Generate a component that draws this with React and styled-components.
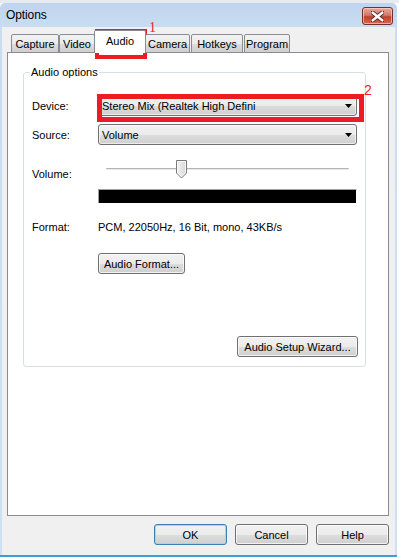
import React from 'react';
import styled, { createGlobalStyle } from 'styled-components';

const GlobalStyle = createGlobalStyle`
  html, body {
    margin: 0;
    padding: 0;
  }
  body {
    width: 399px;
    height: 557px;
    overflow: hidden;
    background: #ffffff;
    font-family: "Liberation Sans", Arial, sans-serif;
    font-size: 11px;
    color: #000;
  }
`;

const Screen = styled.div`
  position: relative;
  width: 399px;
  height: 557px;
  display: flex;
  flex-direction: column;
`;

const TopStrip = styled.div`
  height: 3px;
  background: #e7ebf0;
  border-bottom: 0;
`;

const Window = styled.div`
  width: 397px;
  flex: 1;
  display: flex;
  flex-direction: column;
  box-sizing: border-box;
  background: linear-gradient(180deg, #bfd5ee 0px, #c9dcf1 24px, #cde0f4 100%);
  border-bottom: 2px solid #3b9fd3;
  border-top-right-radius: 5px;
  border-top-left-radius: 5px;
`;

const TitleBar = styled.div`
  height: 24px;
  display: flex;
  align-items: center;
  justify-content: space-between;
  padding: 0 4px 0 6px;
`;

const Title = styled.span`
  font-size: 12px;
  color: #000;
  letter-spacing: -0.1px;
`;

const CloseButton = styled.div`
  width: 29px;
  height: 16px;
  margin-top: 2px;
  display: flex;
  align-items: center;
  justify-content: center;
  border: 1px solid #7a2e26;
  border-radius: 3px;
  background: linear-gradient(180deg, #e9a99c 0%, #d47a6a 45%, #c0402c 55%, #d26a52 100%);
  box-shadow: inset 0 0 0 1px rgba(255, 220, 210, 0.6);
`;

const Client = styled.div`
  flex: 1;
  margin: 0 2px;
  background: #f0f0f0;
  display: flex;
  flex-direction: column;
  padding: 4px 6px 8px 5px;
`;

const TabStrip = styled.div`
  display: flex;
  align-items: flex-end;
  height: 22px;
  padding-left: 4px;
  position: relative;
  z-index: 1;
  margin-bottom: -1px;
`;

const Tab = styled.div`
  box-sizing: border-box;
  width: ${(p) => p.w}px;
  margin-left: ${(p) => p.ml || 0}px;
  height: ${(p) => (p.active ? 23 : 19)}px;
  border: 1px solid #898c95;
  border-bottom: ${(p) => (p.active ? 'none' : '1px solid #898c95')};
  border-radius: 2px 2px 0 0;
  background: ${(p) =>
    p.active ? '#ffffff' : 'linear-gradient(180deg, #f2f2f2 0%, #ebebeb 50%, #dddddd 51%, #cfcfcf 100%)'};
  display: flex;
  align-items: center;
  justify-content: center;
  padding-bottom: ${(p) => (p.active ? 3 : 0)}px;
  white-space: nowrap;
`;

const Panel = styled.div`
  height: 464px;
  box-sizing: border-box;
  border: 1px solid #898c95;
  background: #ffffff;
  padding: 19px 22px 0 15px;
`;

const Group = styled.div`
  position: relative;
  height: 295px;
  box-sizing: border-box;
  border: 1px solid #d5dfe5;
  border-radius: 3px;
  display: flex;
  flex-direction: column;
  padding: 0 7px 9px 8px;
`;

const Legend = styled.span`
  position: absolute;
  top: -7px;
  left: 6px;
  padding: 0 1px;
  background: #ffffff;
  line-height: 13px;
`;

const Row = styled.div`
  display: flex;
  align-items: ${(p) => p.align || 'center'};
  margin-top: ${(p) => p.mt || 0}px;
  height: ${(p) => p.h}px;
`;

const Label = styled.div`
  width: 66px;
  flex: none;
  padding-top: ${(p) => p.pt || 0}px;
`;

const Combo = styled.div`
  width: 259px;
  height: 21px;
  box-sizing: border-box;
  border: 1px solid #707070;
  border-radius: 3px;
  background: linear-gradient(180deg, #f2f2f2 0%, #ebebeb 50%, #dddddd 51%, #cfcfcf 100%);
  display: flex;
  align-items: center;
  justify-content: space-between;
  padding: 0 4px 0 3px;
  box-shadow: inset 0 0 0 1px rgba(255, 255, 255, 0.6);
`;

const SliderBox = styled.div`
  position: relative;
  width: 259px;
  height: 22px;
`;

const Track = styled.div`
  position: absolute;
  left: 8px;
  right: 8px;
  top: 9px;
  height: 2px;
  background: #e7eaea;
  border-top: 1px solid #b5b5b5;
  box-sizing: border-box;
  border-radius: 1px;
`;

const Thumb = styled.svg`
  position: absolute;
  left: 78px;
  top: 1px;
`;

const Meter = styled.div`
  width: 259px;
  height: 14px;
  box-sizing: border-box;
  background: #000;
  border-top: 1px solid #a0a0a0;
  border-left: 1px solid #a0a0a0;
  border-right: 1px solid #ffffff;
`;

const Button = styled.div`
  width: ${(p) => p.w}px;
  height: 21px;
  box-sizing: border-box;
  border: 1px solid ${(p) => (p.primary ? '#3c7fb1' : '#707070')};
  border-radius: 3px;
  background: linear-gradient(180deg, #f2f2f2 0%, #ebebeb 50%, #dddddd 51%, #cfcfcf 100%);
  box-shadow: inset 0 0 0 1px ${(p) => (p.primary ? '#9bd7f6' : 'rgba(255,255,255,0.7)')};
  display: flex;
  align-items: center;
  justify-content: center;
  white-space: nowrap;
`;

const Indent = styled.div`
  margin-left: 66px;
`;

const WizardRow = styled.div`
  margin-top: auto;
  display: flex;
  justify-content: flex-end;
`;

const Footer = styled.div`
  margin-top: 8px;
  display: flex;
  justify-content: flex-end;
  gap: 8px;
`;

const Highlight = styled.div`
  position: absolute;
  left: ${(p) => p.x}px;
  top: ${(p) => p.y}px;
  width: ${(p) => p.w}px;
  height: ${(p) => p.h}px;
  box-sizing: border-box;
  border: ${(p) => p.t}px solid #ed1c24;
  pointer-events: none;
`;

const Marker = styled.span`
  position: absolute;
  left: ${(p) => p.x}px;
  top: ${(p) => p.y}px;
  color: #ed1c24;
  font-family: ${(p) => (p.serif ? '"Liberation Serif", "Times New Roman", serif' : '"Liberation Sans", Arial, sans-serif')};
  font-size: 14px;
  line-height: 14px;
`;

function Arrow() {
  return (
    <svg width="7" height="4" viewBox="0 0 7 4">
      <path d="M0 0H7L3.5 4Z" fill="#000" />
    </svg>
  );
}

function CloseGlyph() {
  return (
    <svg width="13" height="11" viewBox="0 0 13 11">
      <path
        d="M1.5 1.5 L11.5 9.5 M11.5 1.5 L1.5 9.5"
        stroke="#5a2a25"
        strokeWidth="4.2"
        strokeLinecap="round"
      />
      <path d="M1.8 1.8 L11.2 9.2 M11.2 1.8 L1.8 9.2" stroke="#ffffff" strokeWidth="2.4" strokeLinecap="square" />
    </svg>
  );
}

function SliderThumb() {
  return (
    <Thumb width="11" height="19" viewBox="0 0 11 19">
      <defs>
        <linearGradient id="th" x1="0" y1="0" x2="1" y2="0">
          <stop offset="0" stopColor="#f4f4f4" />
          <stop offset="1" stopColor="#d6d6d6" />
        </linearGradient>
      </defs>
      <path d="M0.5 0.5 H10.5 V13 L5.5 18 L0.5 13 Z" fill="url(#th)" stroke="#7a7a7a" />
      <path d="M1.5 1.5 H9.5 V12.6 L5.5 16.6 L1.5 12.6 Z" fill="none" stroke="#ffffff" strokeOpacity="0.8" />
    </Thumb>
  );
}

const tabs = [
  { name: 'Capture', w: 48, ml: 0 },
  { name: 'Video', w: 36, ml: 0 },
  { name: 'Audio', w: 52, ml: -1, active: true },
  { name: 'Camera', w: 45, ml: -1 },
  { name: 'Hotkeys', w: 52, ml: 1 },
  { name: 'Program', w: 46, ml: 1 },
];

export default function App() {
  return (
    <>
      <GlobalStyle />
      <Screen>
        <TopStrip />
        <Window>
          <TitleBar>
            <Title>Options</Title>
            <CloseButton>
              <CloseGlyph />
            </CloseButton>
          </TitleBar>
          <Client>
            <TabStrip>
              {tabs.map((t) => (
                <Tab key={t.name} w={t.w} ml={t.ml} active={t.active}>
                  {t.name}
                </Tab>
              ))}
            </TabStrip>
            <Panel>
              <Group>
                <Legend>Audio options</Legend>
                <Row mt={22} h={21}>
                  <Label>Device:</Label>
                  <Combo>
                    <span>Stereo Mix (Realtek High Defini</span>
                    <Arrow />
                  </Combo>
                </Row>
                <Row mt={8} h={21}>
                  <Label>Source:</Label>
                  <Combo>
                    <span>Volume</span>
                    <Arrow />
                  </Combo>
                </Row>
                <Row mt={14} h={22} align="flex-start">
                  <Label pt={9}>Volume:</Label>
                  <SliderBox>
                    <Track />
                    <SliderThumb />
                  </SliderBox>
                </Row>
                <Row mt={8} h={14}>
                  <Indent>
                    <Meter />
                  </Indent>
                </Row>
                <Row mt={17} h={14}>
                  <Label>Format:</Label>
                  <span>PCM, 22050Hz, 16 Bit, mono, 43KB/s</span>
                </Row>
                <Row mt={19} h={21}>
                  <Indent>
                    <Button w={87}>Audio Format...</Button>
                  </Indent>
                </Row>
                <WizardRow>
                  <Button w={121}>Audio Setup Wizard...</Button>
                </WizardRow>
              </Group>
            </Panel>
            <Footer>
              <Button w={73} primary>
                OK
              </Button>
              <Button w={73}>Cancel</Button>
              <Button w={73}>Help</Button>
            </Footer>
          </Client>
        </Window>
        <Highlight x={95} y={29} w={52} h={30} t={4} />
        <Marker x={149} y={21} serif>
          1
        </Marker>
        <Highlight x={97} y={94} w={267} h={28} t={5} />
        <Marker x={364} y={83}>
          2
        </Marker>
      </Screen>
    </>
  );
}
